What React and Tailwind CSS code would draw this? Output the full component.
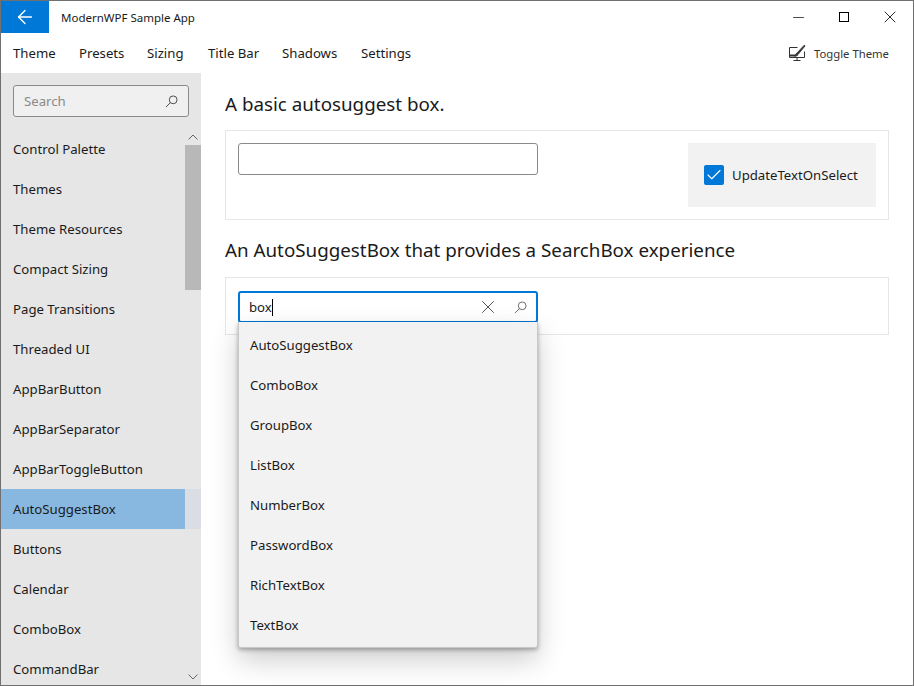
import React from 'react';
import { ArrowLeft, Minus, X, Check } from 'lucide-react';

const menuItems = [
  ['Theme', 'w-[66px]'],
  ['Presets', 'w-[68px]'],
  ['Sizing', 'w-[61px]'],
  ['Title Bar', 'w-[74px]'],
  ['Shadows', 'w-[79px]'],
  ['Settings', 'w-[70px]'],
];

const navItems = [
  'Control Palette', 'Themes', 'Theme Resources', 'Compact Sizing', 'Page Transitions', 'Threaded UI',
  'AppBarButton', 'AppBarSeparator', 'AppBarToggleButton', 'AutoSuggestBox', 'Buttons', 'Calendar',
  'ComboBox', 'CommandBar',
];

const suggestions = ['AutoSuggestBox', 'ComboBox', 'GroupBox', 'ListBox', 'NumberBox', 'PasswordBox', 'RichTextBox', 'TextBox'];

const SearchIcon = ({ className }) => (
  <svg className={className} viewBox="0 0 14 14" fill="none" stroke="currentColor" strokeWidth="1">
    <circle cx="8.8" cy="5.2" r="4.2" />
    <path d="M5.8 8.2 L1 13" />
  </svg>
);

const ToggleThemeIcon = () => (
  <svg className="w-[18px] h-[18px]" viewBox="0 0 18 18" fill="none" stroke="#333" strokeWidth="1">
    <path d="M9.5 3.5 H1.5 V13.5 H16.5 V7.5" />
    <path d="M9 13.5 V16.5 M5.5 16.5 H12.5" />
    <path d="M1.5 11.5 H8" strokeWidth="2" />
    <path d="M8 10 L15 2.5 L16.5 1 L17 2 L10 10.5 Z" fill="#333" strokeWidth="0.8" />
    <path d="M6 12 C7 11.5 7 10 8.5 10 L10 11 C9.5 12 8 12.5 6 12 Z" fill="#333" strokeWidth="0.5" />
  </svg>
);

const ScrollArrow = ({ d, className }) => (
  <svg className={className} viewBox="0 0 10 6" fill="none" stroke="#666" strokeWidth="1">
    <path d={d} />
  </svg>
);

const App = () => {
  return (
    <div className="w-[914px] h-[686px] flex flex-col overflow-hidden bg-white border border-[#707070] text-[#1a1a1a] font-['Noto_Sans',sans-serif] text-[13.2px] leading-[21px]">

      <div className="flex items-center h-[32px] shrink-0">
        <div className="w-[48px] h-[32px] bg-[#0078d7] flex items-center justify-center text-white">
          <ArrowLeft className="w-[22px] h-[22px]" strokeWidth={1.5} absoluteStrokeWidth />
        </div>
        <span className="ml-[12px] text-[11.5px]">ModernWPF Sample App</span>
        <div className="ml-auto flex items-center text-black">
          <div className="w-[46px] flex justify-center"><Minus className="w-[17px] h-[17px]" strokeWidth={1} absoluteStrokeWidth /></div>
          <div className="w-[46px] flex justify-center"><div className="w-[10px] h-[10px] border border-black" /></div>
          <div className="w-[46px] flex justify-center"><X className="w-[20px] h-[20px]" strokeWidth={1} absoluteStrokeWidth /></div>
        </div>
      </div>

      <div className="flex items-center h-[40px] shrink-0 pl-[12px] pr-[24px]">
        {menuItems.map(([label, width]) => (
          <span key={label} className={width}>{label}</span>
        ))}
        <div className="ml-auto flex items-center gap-[8px] text-[11.3px] text-[#333]">
          <ToggleThemeIcon />
          <span>Toggle Theme</span>
        </div>
      </div>

      <div className="flex flex-1 min-h-0">
        <aside className="relative w-[200px] shrink-0 bg-[#e6e6e6] flex flex-col overflow-hidden">
          <div className="pt-[12px] px-[12px] pb-[12px]">
            <div className="h-[32px] w-[176px] flex items-center justify-between px-[10px] bg-[#f0f0f0] border border-[#8a8a8a] rounded-[3px]">
              <span className="text-[#8a8a8a]">Search</span>
              <SearchIcon className="w-[13px] h-[13px] text-[#444]" />
            </div>
          </div>
          <div className="flex flex-col">
            {navItems.map((item) => (
              item === 'AutoSuggestBox' ? (
                <div key={item} className="h-[40px] shrink-0 flex bg-[#dadde4]">
                  <div className="w-[184px] bg-[#88b8e0] flex items-center pl-[12px]">{item}</div>
                </div>
              ) : (
                <div key={item} className="h-[40px] shrink-0 flex items-center pl-[12px]">{item}</div>
              )
            ))}
          </div>
          <div className="absolute top-[56px] right-0 bottom-0 w-[16px] flex flex-col items-center pointer-events-none">
            <ScrollArrow d="M0.5 5.5 L5 1 L9.5 5.5" className="w-[10px] h-[6px] mt-[5px]" />
            <div className="w-[16px] h-[145px] bg-[#b8b8b8] mt-[5px]" />
            <ScrollArrow d="M0.5 0.5 L5 5 L9.5 0.5" className="w-[10px] h-[6px] mt-auto mb-[5px]" />
          </div>
        </aside>

        <main className="flex-1 min-w-0 pl-[24px] pr-[24px]">
          <h2 className="text-[18.8px] leading-[26px] mt-[18px] mb-[13px]">A basic autosuggest box.</h2>
          <div className="h-[90px] border border-[#e6e6e6] p-[12px] flex justify-between">
            <div className="w-[300px] h-[32px] border border-[#8a8a8a] rounded-[3px] bg-white" />
            <div className="w-[188px] h-[64px] bg-[#f2f2f2] flex items-center pl-[16px] gap-[8px]">
              <div className="w-[20px] h-[20px] rounded-[2px] bg-[#0078d7] flex items-center justify-center text-white">
                <Check className="w-[18px] h-[18px]" strokeWidth={1.5} absoluteStrokeWidth />
              </div>
              <span>UpdateTextOnSelect</span>
            </div>
          </div>

          <h2 className="text-[18.8px] leading-[26px] mt-[17px] mb-[14px]">An AutoSuggestBox that provides a SearchBox experience</h2>
          <div className="h-[58px] border border-[#e6e6e6] px-[12px] pt-[13px]">
            <div className="relative w-[300px] h-[32px] z-10">
              <div className="h-[32px] border-2 border-[#0078d7] rounded-[3px] bg-white flex items-center pl-[9px] pr-[9px]">
                <span>box</span>
                <span className="w-px h-[17px] bg-black" />
                <X className="ml-auto w-[22px] h-[22px] text-[#444]" strokeWidth={1} absoluteStrokeWidth />
                <SearchIcon className="ml-[15px] w-[13px] h-[13px] text-[#666]" />
              </div>
              <div className="absolute left-0 right-0 top-[31px] h-[326px] pt-[3px] bg-[#f2f2f2] border border-t-0 border-[#c8c8c8] rounded-b-[3px] shadow-[0_2px_4px_rgba(0,0,0,0.3),0_12px_28px_rgba(0,0,0,0.2)] flex flex-col">
                {suggestions.map((s) => (
                  <div key={s} className="h-[40px] shrink-0 flex items-center pl-[11px]">{s}</div>
                ))}
              </div>
            </div>
          </div>
        </main>
      </div>
    </div>
  );
};

export default App;
